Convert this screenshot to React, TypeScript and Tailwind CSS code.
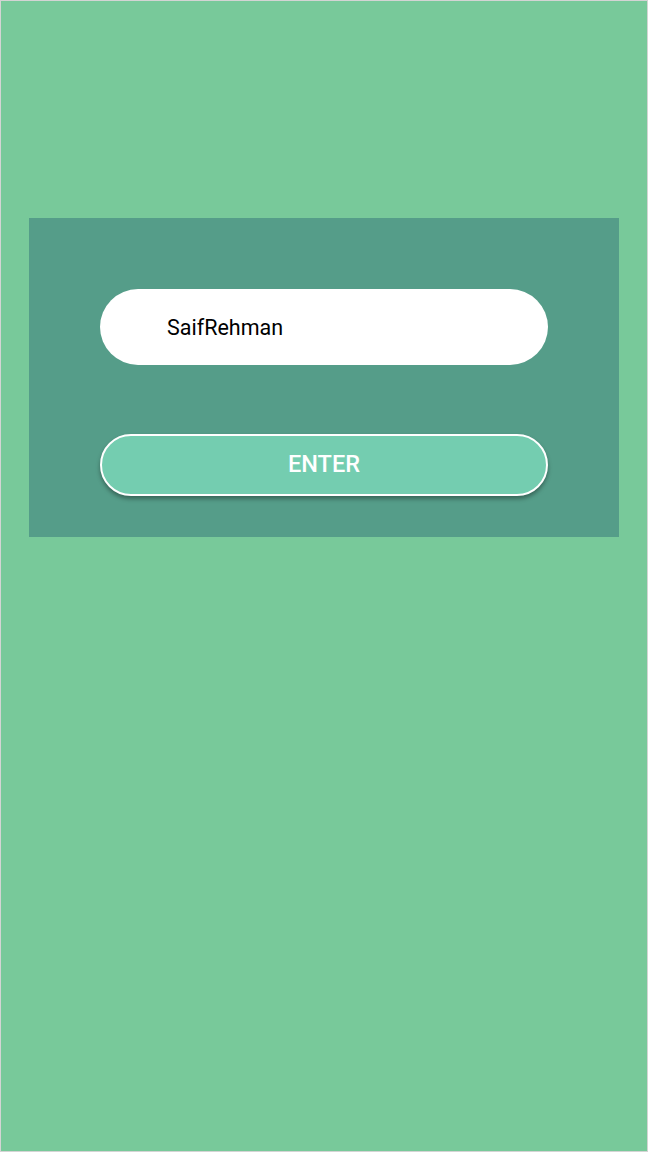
import React, { useState } from 'react';

const App: React.FC = () => {
  const [name, setName] = useState('SaifRehman');

  return (
    <div
      className="w-[648px] h-[1152px] bg-[#78c99a] border border-[#d4d4d4] pt-[217px] px-[28px]"
      style={{ fontFamily: 'Roboto, "Noto Sans", sans-serif' }}
    >
      <div className="w-[590px] h-[319px] bg-[#559d89] pt-[71px] px-[71px]">
        <input
          value={name}
          onChange={(e) => setName(e.target.value)}
          className="block w-[448px] h-[76px] rounded-full bg-white pl-[67px] text-[21.5px] text-black outline-none"
        />
        <button className="mt-[69px] w-[448px] h-[62px] rounded-full bg-[#74cdb0] border-2 border-white text-white text-[23.5px] font-medium shadow-[0_3px_4px_rgba(0,0,0,0.35)]">
          ENTER
        </button>
      </div>
    </div>
  );
};

export default App;
